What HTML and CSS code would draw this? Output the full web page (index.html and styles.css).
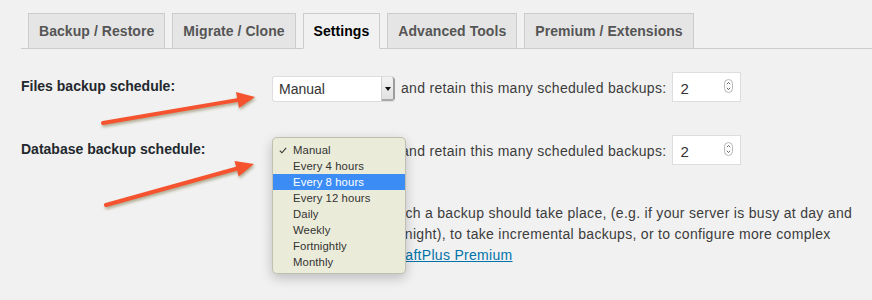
FILE: index.html
```html
<!DOCTYPE html>
<html>
<head>
<meta charset="utf-8">
<link rel="stylesheet" href="styles.css">
</head>
<body>
<div class="wrap">
  <nav class="tabs">
    <a class="tab">Backup / Restore</a>
    <a class="tab">Migrate / Clone</a>
    <a class="tab active">Settings</a>
    <a class="tab">Advanced Tools</a>
    <a class="tab">Premium / Extensions</a>
  </nav>

  <div class="row r1">
    <div class="label">Files backup schedule:</div>
    <div class="field">
      <div class="controls">
        <div class="select"><span class="sel-text">Manual</span><span class="sel-btn"><span class="tri"></span></span></div>
        <span class="retain">and retain this many scheduled backups:</span>
        <div class="num"><span class="num-val">2</span>
          <svg class="spin" width="9" height="14" viewBox="0 0 9 14"><rect x="0.5" y="0.5" width="8" height="13" rx="4" fill="#fff" stroke="#b8b8b8"/><path d="M2.8 5.2 L4.5 3.5 L6.2 5.2" fill="none" stroke="#555" stroke-width="0.9"/><path d="M2.8 8.8 L4.5 10.5 L6.2 8.8" fill="none" stroke="#555" stroke-width="0.9"/></svg>
        </div>
      </div>
    </div>
  </div>

  <div class="row r2">
    <div class="label">Database backup schedule:</div>
    <div class="field">
      <div class="controls">
        <div class="select"><span class="sel-text">Manual</span><span class="sel-btn"><span class="tri"></span></span></div>
        <span class="retain">and retain this many scheduled backups:</span>
        <div class="num"><span class="num-val">2</span>
          <svg class="spin" width="9" height="14" viewBox="0 0 9 14"><rect x="0.5" y="0.5" width="8" height="13" rx="4" fill="#fff" stroke="#b8b8b8"/><path d="M2.8 5.2 L4.5 3.5 L6.2 5.2" fill="none" stroke="#555" stroke-width="0.9"/><path d="M2.8 8.8 L4.5 10.5 L6.2 8.8" fill="none" stroke="#555" stroke-width="0.9"/></svg>
        </div>
      </div>
      <p class="note">To fix the time at which a backup should take place, (e.g. if your server is busy at day and you want to run overnight), to take incremental backups, or to configure more complex schedules, use <a class="link">UpdraftPlus Premium</a></p>
    </div>
  </div>

  <ul class="menu">
    <li class="item checked"><svg class="check" width="8" height="7" viewBox="0 0 8 7"><path d="M0.8 3.6 L2.9 5.8 L7.2 0.8" fill="none" stroke="#333" stroke-width="1.1"/></svg>Manual</li>
    <li class="item">Every 4 hours</li>
    <li class="item hl">Every 8 hours</li>
    <li class="item">Every 12 hours</li>
    <li class="item">Daily</li>
    <li class="item">Weekly</li>
    <li class="item">Fortnightly</li>
    <li class="item">Monthly</li>
  </ul>

  <svg class="arrows" width="872" height="300" viewBox="0 0 872 300">
    <g class="arrow">
      <line x1="103" y1="123" x2="240" y2="99.6" stroke="#f5532f" stroke-width="4" stroke-linecap="round"/>
      <polygon points="236,92 255,97 239,108" fill="#f5532f"/>
    </g>
    <g class="arrow">
      <line x1="106" y1="205" x2="239" y2="168" stroke="#f5532f" stroke-width="4" stroke-linecap="round"/>
      <polygon points="234.5,161 254,164 238.7,176.5" fill="#f5532f"/>
    </g>
  </svg>
</div>
</body>
</html>
```

FILE: styles.css
```css
html, body {
  margin: 0;
  padding: 0;
  background: #f1f1f1;
}
body {
  width: 872px;
  height: 300px;
  overflow: hidden;
  font-family: "Liberation Sans", Arial, sans-serif;
  font-size: 14px;
  color: #444;
}
.wrap {
  position: relative;
  padding-left: 21px;
  height: 300px;
}
.tabs {
  display: flex;
  align-items: flex-end;
  padding-top: 13px;
  border-bottom: 1px solid #ccc;
}
.tab {
  margin-left: 7px;
  border: 1px solid #ccc;
  border-bottom: none;
  padding: 5px 10px;
  line-height: 24px;
  font-size: 14px;
  font-weight: 700;
  letter-spacing: 0.06px;
  background: #e5e5e5;
  color: #555;
  white-space: nowrap;
}
.tab.active {
  background: #f1f1f1;
  color: #000;
  margin-bottom: -1px;
  border-bottom: 1px solid #f1f1f1;
}
.row {
  display: grid;
  grid-template-columns: 251px 1fr;
}
.r1 { margin-top: 23px; }
.r2 { margin-top: 33px; }
.label {
  margin-top: 3.5px;
  line-height: 20px;
  font-weight: 700;
  color: #23282d;
  white-space: nowrap;
}
.controls {
  display: flex;
  align-items: flex-start;
}
.select {
  box-sizing: border-box;
  margin-top: 4px;
  width: 123px;
  height: 26px;
  display: flex;
  background: #fff;
  border: 1px solid #ddd;
  border-right: none;
  border-radius: 3px;
  overflow: hidden;
}
.sel-text {
  flex: 1;
  padding-left: 6px;
  line-height: 25px;
  font-size: 14px;
  color: #333;
}
.sel-btn {
  box-sizing: border-box;
  width: 14px;
  height: 100%;
  display: flex;
  align-items: center;
  justify-content: center;
  background: linear-gradient(#f3f3f3, #e2e2e2);
  border-left: 1px solid #d0d0d0;
  border-right: 2px solid #9d9d9d;
  border-bottom: 2px solid #a9a9a9;
  border-radius: 0 3px 3px 0;
}
.tri {
  width: 0;
  height: 0;
  border-left: 3px solid transparent;
  border-right: 3px solid transparent;
  border-top: 4px solid #111;
  margin-top: 1px;
}
.retain {
  margin-left: 6px;
  margin-top: 6px;
  line-height: 20px;
  letter-spacing: 0.3px;
  color: #3c3c3c;
  white-space: nowrap;
}
.num {
  box-sizing: border-box;
  margin-left: 6px;
  width: 69px;
  height: 30px;
  display: flex;
  align-items: center;
  justify-content: space-between;
  padding: 0 7px 0 7px;
  background: #fff;
  border: 1px solid #ddd;
}
.num-val {
  font-size: 15px;
  color: #333;
  margin-top: 2px;
}
.spin {
  display: block;
  margin-top: -2px;
}
.note {
  margin: 38px 0 0 0;
  width: 592px;
  line-height: 21px;
  letter-spacing: 0.3px;
  color: #3c3c3c;
}
.link {
  color: #0073aa;
  text-decoration: underline;
}
.menu {
  position: absolute;
  left: 272px;
  top: 137px;
  box-sizing: border-box;
  width: 134px;
  height: 137px;
  margin: 0;
  padding: 4px 0 3px 0;
  list-style: none;
  background: #ebebd9;
  border: 1px solid rgba(0, 0, 0, 0.18);
  border-radius: 5px;
  box-shadow: 0 4px 12px rgba(0, 0, 0, 0.22);
  font-size: 11.3px;
  color: #333;
  overflow: hidden;
}
.item {
  position: relative;
  height: 16px;
  line-height: 16px;
  padding-left: 20px;
  letter-spacing: 0.1px;
}
.item.hl {
  background: #3c8cf6;
  color: #fff;
}
.check {
  position: absolute;
  left: 6px;
  top: 5px;
}
.arrows {
  position: absolute;
  left: 0;
  top: 0;
  pointer-events: none;
}
.arrow {
  filter: drop-shadow(1px 2px 1.5px rgba(90, 80, 20, 0.45));
}
```
